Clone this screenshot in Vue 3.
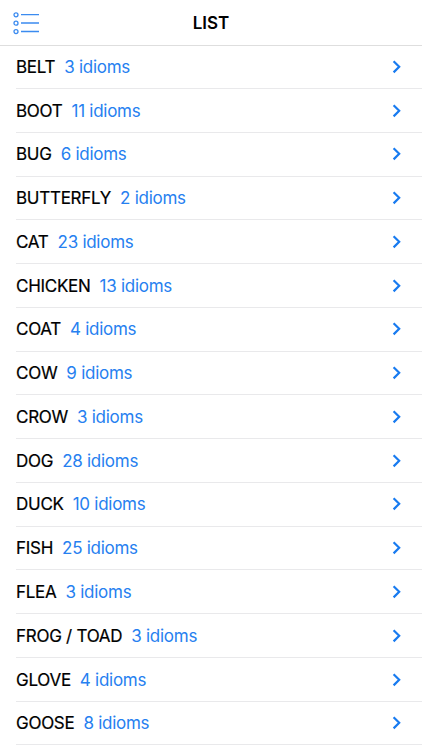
<script setup>
const rows = [
  ['BELT', 3], ['BOOT', 11], ['BUG', 6], ['BUTTERFLY', 2], ['CAT', 23], ['CHICKEN', 13],
  ['COAT', 4], ['COW', 9], ['CROW', 3], ['DOG', 28], ['DUCK', 10], ['FISH', 25],
  ['FLEA', 3], ['FROG / TOAD', 3], ['GLOVE', 4], ['GOOSE', 8],
]
</script>

<template>
  <div class="screen">
    <header class="bar">
      <svg class="menu" width="28" height="23" viewBox="0 0 28 23" fill="none" stroke="#3b8bf0" stroke-width="1.3">
        <circle cx="3" cy="2.8" r="2" /><circle cx="3" cy="11.2" r="2" /><circle cx="3" cy="19.6" r="2" />
        <path d="M8 2.6H26M8 11H26M8 19.5H26" />
      </svg>
      <h1 class="title">LIST</h1>
    </header>
    <ul class="list">
      <li v-for="[name, n] in rows" :key="name" class="row">
        <span class="name">{{ name }}</span>
        <span class="count">{{ n }} idioms</span>
        <svg class="chev" width="10" height="16" viewBox="0 0 10 16" fill="none" stroke="#187bf0" stroke-width="2.2">
          <path d="M1.6 2.2L7.2 7.8L1.6 13.4" />
        </svg>
      </li>
    </ul>
  </div>
</template>

<style>
body { margin: 0; background: #fff; overflow: hidden; }
</style>
<style scoped>
.screen { height: 750px; overflow: hidden; font-family: Inter, sans-serif; background: #fff; }
.bar { box-sizing: border-box; height: 46px; border-bottom: 1px solid #dedede; display: grid; grid-template-columns: 60px 1fr 60px; align-items: center; }
.menu { margin-left: 13px; margin-top: 1px; }
.title { margin: 0; text-align: center; font-size: 17px; font-weight: 600; color: #000; }
.list { list-style: none; margin: 0; padding: 0 0 0 16px; }
.row { box-sizing: border-box; height: 43.77px; padding-top: 0.45px; border-bottom: 1px solid #e9e9eb; display: flex; align-items: center; font-size: 17px; white-space: pre; }
.list .row:first-child { height: 43px; }
.name { font-weight: 400; -webkit-text-stroke: 0.2px #000; letter-spacing: -0.27px; color: #000; }
.count { margin-left: 9px; letter-spacing: -0.27px; color: #2680f0; }
.chev { margin-left: auto; margin-right: 20px; }
</style>
